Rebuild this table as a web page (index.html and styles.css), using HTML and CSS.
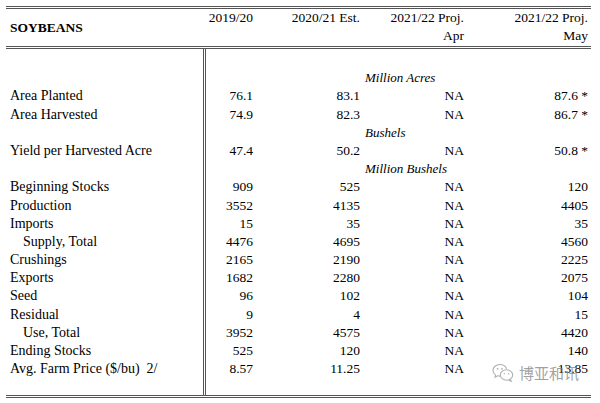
FILE: index.html
```html
<!DOCTYPE html>
<html>
<head>
<meta charset="utf-8">
<link rel="stylesheet" href="styles.css">
</head>
<body>
<div class="sheet">
  <div class="head">
    <div class="title">SOYBEANS</div>
    <div class="hnum">2019/20</div>
    <div class="hnum">2020/21 Est.</div>
    <div class="hnum">2021/22 Proj.<br>Apr</div>
    <div class="hnum last">2021/22 Proj.<br>May</div>
  </div>
  <div class="body">
    <div class="row first"><div class="lab"></div><div class="num c1"></div><div class="num"></div><div class="num"></div><div class="num last"></div></div>
    <div class="row"><div class="lab"></div><div class="num c1"></div><div class="num"></div><div class="unit">Million Acres</div></div>
    <div class="row"><div class="lab">Area Planted</div><div class="num c1">76.1</div><div class="num">83.1</div><div class="num">NA</div><div class="num last">87.6 *</div></div>
    <div class="row"><div class="lab">Area Harvested</div><div class="num c1">74.9</div><div class="num">82.3</div><div class="num">NA</div><div class="num last">86.7 *</div></div>
    <div class="row"><div class="lab"></div><div class="num c1"></div><div class="num"></div><div class="unit">Bushels</div></div>
    <div class="row"><div class="lab">Yield per Harvested Acre</div><div class="num c1">47.4</div><div class="num">50.2</div><div class="num">NA</div><div class="num last">50.8 *</div></div>
    <div class="row"><div class="lab"></div><div class="num c1"></div><div class="num"></div><div class="unit">Million Bushels</div></div>
    <div class="row"><div class="lab">Beginning Stocks</div><div class="num c1">909</div><div class="num">525</div><div class="num">NA</div><div class="num last">120</div></div>
    <div class="row"><div class="lab">Production</div><div class="num c1">3552</div><div class="num">4135</div><div class="num">NA</div><div class="num last">4405</div></div>
    <div class="row"><div class="lab">Imports</div><div class="num c1">15</div><div class="num">35</div><div class="num">NA</div><div class="num last">35</div></div>
    <div class="row"><div class="lab indent">Supply, Total</div><div class="num c1">4476</div><div class="num">4695</div><div class="num">NA</div><div class="num last">4560</div></div>
    <div class="row"><div class="lab">Crushings</div><div class="num c1">2165</div><div class="num">2190</div><div class="num">NA</div><div class="num last">2225</div></div>
    <div class="row"><div class="lab">Exports</div><div class="num c1">1682</div><div class="num">2280</div><div class="num">NA</div><div class="num last">2075</div></div>
    <div class="row"><div class="lab">Seed</div><div class="num c1">96</div><div class="num">102</div><div class="num">NA</div><div class="num last">104</div></div>
    <div class="row"><div class="lab">Residual</div><div class="num c1">9</div><div class="num">4</div><div class="num">NA</div><div class="num last">15</div></div>
    <div class="row"><div class="lab indent">Use, Total</div><div class="num c1">3952</div><div class="num">4575</div><div class="num">NA</div><div class="num last">4420</div></div>
    <div class="row"><div class="lab">Ending Stocks</div><div class="num c1">525</div><div class="num">120</div><div class="num">NA</div><div class="num last">140</div></div>
    <div class="row"><div class="lab">Avg. Farm Price ($/bu)&nbsp; 2/</div><div class="num c1">8.57</div><div class="num">11.25</div><div class="num">NA</div><div class="num last">13.85</div></div>
    <div class="row final"><div class="lab"></div><div class="num c1"></div><div class="num"></div><div class="num"></div><div class="num last"></div></div>
  </div>
  <div class="watermark">
    <svg class="wx" width="22" height="20" viewBox="0 0 22 20">
      <path d="M8 1.5C4 1.5 1 4.2 1 7.4c0 1.8 1 3.4 2.5 4.5L3 14.2l2.6-1.4c.8.2 1.6.3 2.4.3" fill="none" stroke="#b0b0b0" stroke-width="1.1"/>
      <path d="M14.6 5.8C13.6 3.2 11 1.5 8 1.5" fill="none" stroke="#b0b0b0" stroke-width="1.1"/>
      <ellipse cx="14.5" cy="12" rx="6.2" ry="5.2" fill="none" stroke="#b0b0b0" stroke-width="1.1"/>
      <path d="M18.3 16.2l1 2.2-2.6-1.3" fill="none" stroke="#b0b0b0" stroke-width="1.1"/>
      <circle cx="5.6" cy="5.8" r="0.9" fill="#b0b0b0"/>
      <circle cx="10" cy="5.8" r="0.9" fill="#b0b0b0"/>
      <circle cx="12.3" cy="10.8" r="0.7" fill="#b0b0b0"/>
      <circle cx="16.5" cy="10.8" r="0.7" fill="#b0b0b0"/>
    </svg>
    <span class="wtext">博亚和讯</span>
  </div>
</div>
</body>
</html>
```
FILE: styles.css
```css
html, body {
  margin: 0;
  padding: 0;
  background: #fff;
}
body {
  font-family: "Liberation Serif", "Times New Roman", serif;
  color: #000;
}
.sheet {
  position: relative;
  width: 585px;
  margin: 6px 0 0 6px;
}
.head {
  display: grid;
  grid-template-columns: 197px 55px 107px 104px 122px;
  border-top: 3px double #555;
  border-bottom: 3px double #555;
  padding-bottom: 1px;
  line-height: 18px;
  font-size: 13.5px;
}
.title {
  font-weight: bold;
  align-self: center;
  padding-left: 4px;
  padding-top: 1px;
}
.hnum {
  text-align: right;
  padding-right: 5px;
  height: 36px;
}
.body {
  border-bottom: 3px double #555;
}
.row {
  display: grid;
  grid-template-columns: 197px 55px 107px 104px 122px;
  height: 18.2px;
  line-height: 18.2px;
}
.row.first {
  height: 20.2px;
}
.row.final {
  height: 16.2px;
}
.lab {
  font-size: 14px;
  padding-left: 4px;
  white-space: nowrap;
}
.lab.indent {
  padding-left: 17px;
}
.num {
  font-size: 13.5px;
  text-align: right;
  padding-right: 5px;
  white-space: nowrap;
}
.last {
  padding-right: 3px;
}
.c1 {
  border-left: 3px double #555;
}
.unit {
  grid-column: 4 / 6;
  font-style: italic;
  font-size: 13px;
  text-align: left;
  white-space: nowrap;
}
.watermark {
  position: absolute;
  left: 486px;
  top: 357px;
  display: flex;
  align-items: center;
  gap: 5px;
}
.wx {
  display: block;
}
.wtext {
  font-family: "Noto Sans CJK SC", sans-serif;
  font-size: 15px;
  line-height: 18px;
  color: rgba(130, 130, 130, 0.75);
}
```
